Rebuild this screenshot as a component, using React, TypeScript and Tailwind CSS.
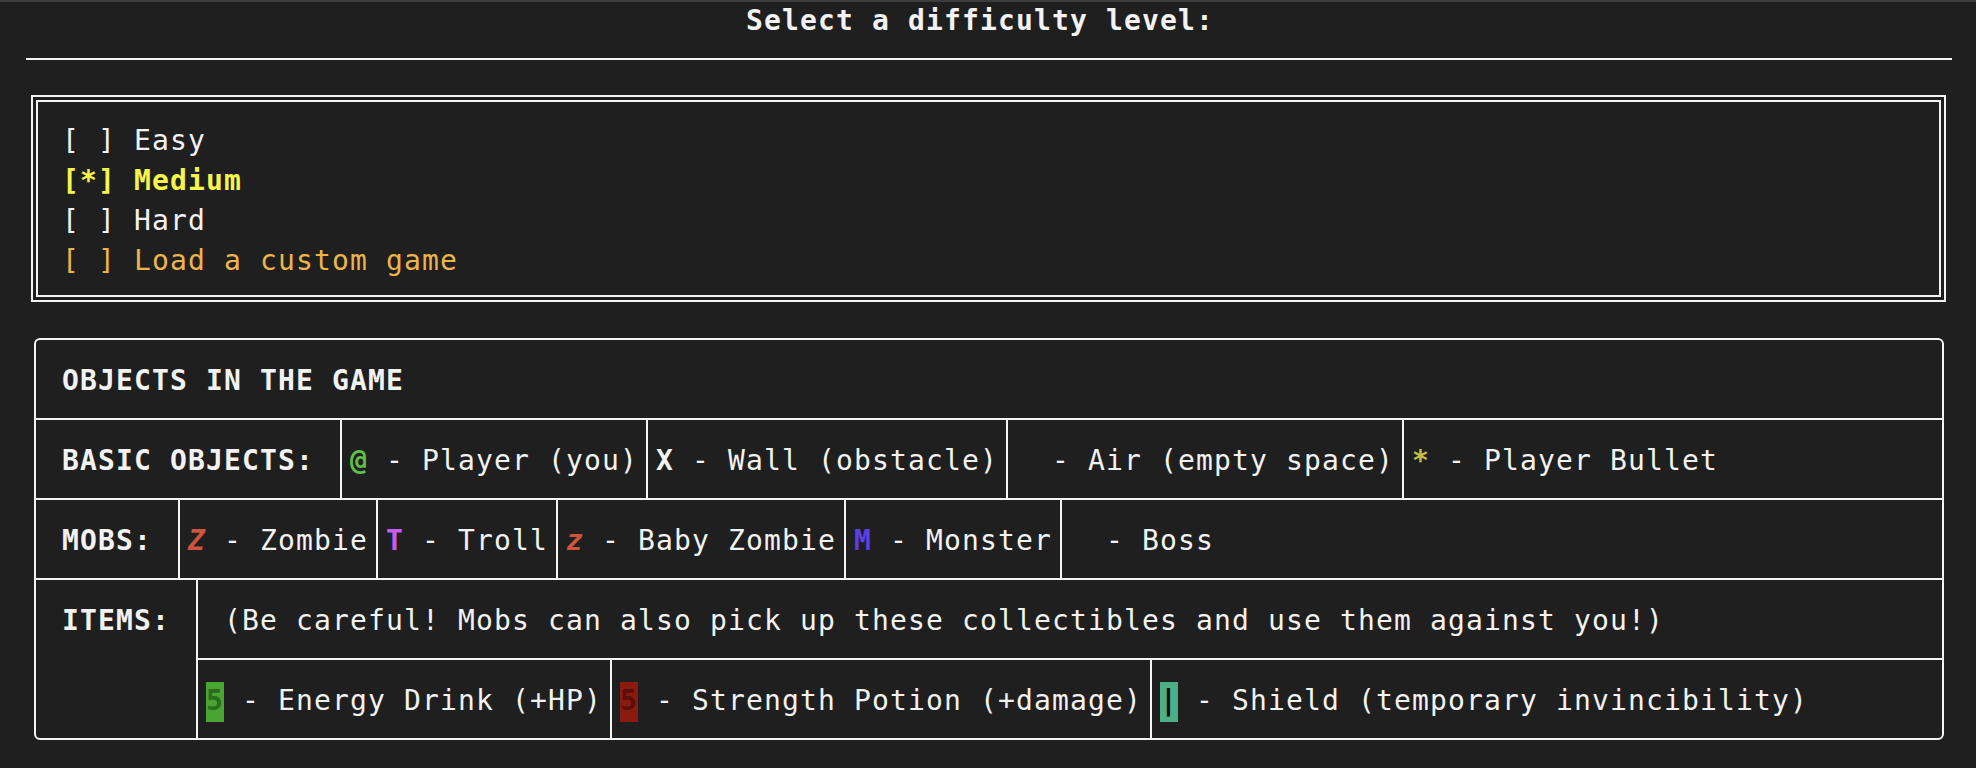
const options = [
  { label: '[ ] Easy', cls: 'text-[#f2f2f2]' },
  { label: '[*] Medium', cls: 'text-[#f7f54a] font-bold' },
  { label: '[ ] Hard', cls: 'text-[#f2f2f2]' },
  { label: '[ ] Load a custom game', cls: 'text-[#ecb54a]' },
]

const basics = [
  { sym: '@', cls: 'text-[#5fbf45]', text: ' - Player (you)', w: 'w-[306px]' },
  { sym: 'X', cls: 'text-[#f2f2f2]', text: ' - Wall (obstacle)', w: 'w-[360px]' },
  { sym: ' ', cls: '', text: ' - Air (empty space)', w: 'w-[396px]' },
  { sym: '*', cls: 'text-[#c4bb4a]', text: ' - Player Bullet', w: 'flex-1' },
]

const mobs = [
  { sym: 'Z', cls: 'text-[#cc553b] italic', text: ' - Zombie', w: 'w-[198px]' },
  { sym: 'T', cls: 'text-[#c65cf2]', text: ' - Troll', w: 'w-[180px]' },
  { sym: 'z', cls: 'text-[#cc553b] italic', text: ' - Baby Zombie', w: 'w-[288px]' },
  { sym: 'M', cls: 'text-[#5b40e6]', text: ' - Monster', w: 'w-[216px]' },
  { sym: ' ', cls: '', text: ' - Boss', w: 'flex-1' },
]

const items = [
  { sym: '5', swatch: 'bg-[#48a532] text-[#2c6b20]', text: ' - Energy Drink (+HP)', w: 'w-[412px]', first: true },
  { sym: '5', swatch: 'bg-[#8a1b10] text-[#5c0f08]', text: ' - Strength Potion (+damage)', w: 'w-[540px]' },
  { sym: '|', swatch: 'bg-[#4caf88] text-[#0a0a0a]', text: ' - Shield (temporary invincibility)', w: 'flex-1' },
]

function Line({ children, className = '' }: { children: React.ReactNode; className?: string }) {
  return <div className={`flex h-10 leading-[37px] ${className}`}>{children}</div>
}

export default function App() {
  return (
    <div className="h-[768px] w-full overflow-hidden whitespace-pre bg-[#1f1f1f] font-['DejaVu_Sans_Mono','Liberation_Mono',monospace] text-[28px] tracking-[1.143px] text-[#f2f2f2]">
      <div className="h-[2px] bg-[#3d3d3d]" />

      <Line className="ml-[8px] w-[1944px] justify-center font-bold">Select a difficulty level:</Line>

      <div className="ml-[26px] mt-[16px] mb-[35px] h-[2px] w-[1926px] bg-[#f4f4f4]" />

      {/* difficulty choices, double frame */}
      <div className="ml-[31px] h-[207px] w-[1915px] border-2 border-[#f4f4f4] p-[3px]">
        <div className="h-full border-2 border-[#f4f4f4] pl-[24px] pt-[20px]">
          {options.map((o) => (
            <Line key={o.label} className={o.cls}>
              {o.label}
            </Line>
          ))}
        </div>
      </div>

      {/* objects table */}
      <div className="ml-[34px] mt-[36px] w-[1910px] rounded-[6px] border-2 border-[#f4f4f4]">
        <div className="h-[78px] pl-[26px] pt-[22px]">
          <Line className="font-bold">OBJECTS IN THE GAME</Line>
        </div>

        <div className="flex h-[80px] border-t-2 border-[#f4f4f4]">
          <div className="w-[304px] shrink-0 pl-[26px] pt-[22px]">
            <Line className="font-bold">BASIC OBJECTS:</Line>
          </div>
          {basics.map((b) => (
            <div key={b.text} className={`${b.w} shrink-0 border-l-2 border-[#f4f4f4] pl-[8px] pt-[22px]`}>
              <Line>
                <span className={`font-bold ${b.cls}`}>{b.sym}</span>
                <span>{b.text}</span>
              </Line>
            </div>
          ))}
        </div>

        <div className="flex h-[80px] border-t-2 border-[#f4f4f4]">
          <div className="w-[142px] shrink-0 pl-[26px] pt-[22px]">
            <Line className="font-bold">MOBS:</Line>
          </div>
          {mobs.map((m) => (
            <div key={m.text} className={`${m.w} shrink-0 border-l-2 border-[#f4f4f4] pl-[8px] pt-[22px]`}>
              <Line>
                <span className={`font-bold ${m.cls}`}>{m.sym}</span>
                <span>{m.text}</span>
              </Line>
            </div>
          ))}
        </div>

        <div className="flex h-[160px] border-t-2 border-[#f4f4f4]">
          <div className="w-[160px] shrink-0 pl-[26px] pt-[22px]">
            <Line className="font-bold">ITEMS:</Line>
          </div>
          <div className="flex flex-1 flex-col border-l-2 border-[#f4f4f4]">
            <div className="h-[78px] pl-[8px] pt-[22px]">
              <Line> (Be careful! Mobs can also pick up these collectibles and use them against you!)</Line>
            </div>
            <div className="flex h-[80px] border-t-2 border-[#f4f4f4]">
              {items.map((it) => (
                <div
                  key={it.text}
                  className={`${it.w} shrink-0 pl-[8px] pt-[22px] ${it.first ? '' : 'border-l-2 border-[#f4f4f4]'}`}
                >
                  <Line>
                    <span className={`h-10 w-[18px] font-bold ${it.swatch}`}>{it.sym}</span>
                    <span>{it.text}</span>
                  </Line>
                </div>
              ))}
            </div>
          </div>
        </div>
      </div>
    </div>
  )
}
